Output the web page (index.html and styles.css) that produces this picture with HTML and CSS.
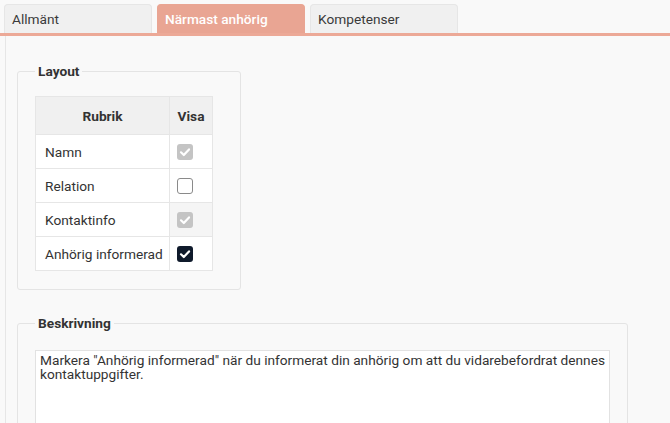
FILE: index.html
```
<!DOCTYPE html>
<html lang="sv">
<head>
<meta charset="utf-8">
<title>Närmast anhörig</title>
<link rel="stylesheet" href="styles.css">
</head>
<body>
<div class="tabs">
  <div class="tab">Allmänt</div>
  <div class="tab active">Närmast anhörig</div>
  <div class="tab">Kompetenser</div>
</div>
<div class="panel">
  <fieldset class="box layout">
    <legend>Layout</legend>
    <table class="grid">
      <colgroup><col class="w1"><col class="w2"></colgroup>
      <thead>
        <tr><th>Rubrik</th><th>Visa</th></tr>
      </thead>
      <tbody>
        <tr><td class="c1">Namn</td><td class="c2"><span class="cb disabled"><svg viewBox="0 0 16 16"><path d="M4 8.3l2.8 2.7L12 5.4"/></svg></span></td></tr>
        <tr><td class="c1">Relation</td><td class="c2"><span class="cb"></span></td></tr>
        <tr><td class="c1">Kontaktinfo</td><td class="c2 shade"><span class="cb disabled"><svg viewBox="0 0 16 16"><path d="M4 8.3l2.8 2.7L12 5.4"/></svg></span></td></tr>
        <tr><td class="c1">Anhörig informerad</td><td class="c2"><span class="cb checked"><svg viewBox="0 0 16 16"><path d="M4 8.3l2.8 2.7L12 5.4"/></svg></span></td></tr>
      </tbody>
    </table>
  </fieldset>
  <fieldset class="box desc">
    <legend>Beskrivning</legend>
    <div class="textarea">Markera "Anhörig informerad" när du informerat din anhörig om att du vidarebefordrat dennes kontaktuppgifter.</div>
  </fieldset>
</div>
</body>
</html>
```
FILE: styles.css
```
html, body {
  margin: 0;
  padding: 0;
  background: #f9f9f9;
  font-family: Roboto, "Liberation Sans", sans-serif;
  color: #333;
  overflow: hidden;
}

.tabs {
  display: flex;
  gap: 5px;
  padding: 4px 0 0 4px;
  border-bottom: 3px solid #eca997;
}

.tab {
  box-sizing: border-box;
  width: 148px;
  height: 29px;
  padding: 0 7px;
  background: #f0f0f0;
  border: 1px solid #e6e6e6;
  border-bottom: none;
  border-radius: 4px 4px 0 0;
  font-size: 13.7px;
  line-height: 28px;
  color: #3a3a3a;
}

.tab.active {
  background: #e9a593;
  border-color: #e9a593;
  color: #fff;
  font-weight: 500;
}

.panel {
  box-sizing: border-box;
  height: 387px;
  overflow: hidden;
  margin-left: 5px;
  border-left: 1px solid #e6e6e6;
  padding: 27px 0 0 11px;
}

.box {
  box-sizing: border-box;
  margin: 0;
  border: 1px solid #e4e4e4;
  border-radius: 3px;
  padding: 0 17px;
}

.box legend {
  margin-left: 0;
  padding: 0 3px;
  font-size: 13.7px;
  font-weight: 700;
  color: #333;
}

.layout {
  width: 224px;
  padding-top: 17px;
  padding-bottom: 18px;
}

.desc {
  margin-top: 25px;
  width: 611px;
  padding-top: 19px;
  padding-bottom: 0;
  height: 120px;
}

.grid {
  table-layout: fixed;
  width: 177px;
  border-collapse: collapse;
  background: #fff;
  font-size: 13.7px;
}

.grid .w1 {
  width: 134px;
}

.grid .w2 {
  width: 43px;
}

.grid th, .grid td {
  border: 1px solid #e6e6e6;
  padding: 0;
  white-space: nowrap;
}

.grid th {
  background: #f0f0f0;
  font-weight: 700;
  height: 37px;
  text-align: center;
}

.grid td {
  height: 33px;
}

.grid td.c1 {
  padding-left: 9px;
}

.grid td.c2 {
  padding-left: 7px;
}

.grid td.shade {
  background: #f5f5f5;
}

.cb {
  box-sizing: border-box;
  display: block;
  width: 16px;
  height: 16px;
  border: 1.5px solid #8a8a8a;
  border-radius: 3px;
  background: #fff;
}

.cb svg {
  display: block;
  width: 100%;
  height: 100%;
  fill: none;
  stroke: #fff;
  stroke-width: 2.2;
  stroke-linecap: round;
  stroke-linejoin: round;
}

.cb.disabled {
  border: none;
  background: #c4c4c4;
}

.cb.checked {
  border: none;
  background: #0f1a2b;
}

.textarea {
  box-sizing: border-box;
  width: 575px;
  height: 100px;
  background: #fff;
  border: 1px solid #e2e2e2;
  border-bottom: none;
  padding: 2px 4px;
  font-size: 13.7px;
  line-height: 14px;
  color: #333;
}
```
